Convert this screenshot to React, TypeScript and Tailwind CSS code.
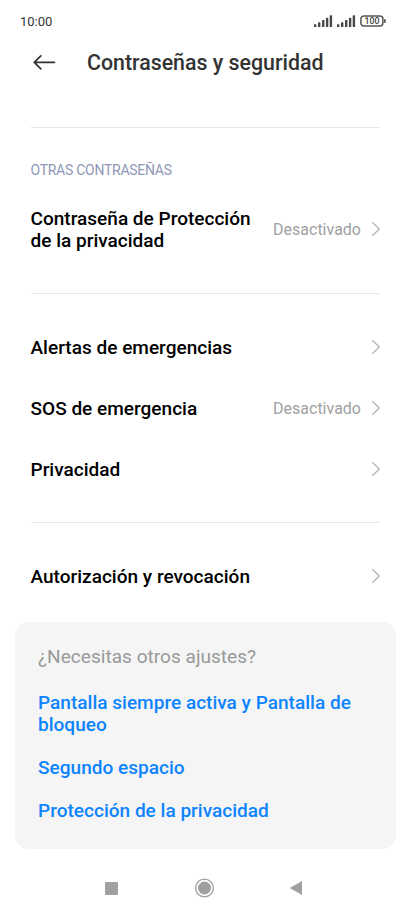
import React from 'react';

const shortcuts = [
  'Pantalla siempre activa y Pantalla de bloqueo',
  'Segundo espacio',
  'Protección de la privacidad',
];

const Signal = () => (
  <svg width="19" height="12" viewBox="0 0 19 12" fill="#484848">
    <rect x="0" y="9.2" width="2.4" height="2.8" rx="0.6" />
    <rect x="4" y="7.2" width="2.4" height="4.8" rx="0.6" />
    <rect x="8" y="5" width="2.4" height="7" rx="0.6" />
    <rect x="11.9" y="2.8" width="2.4" height="9.2" rx="0.6" />
    <rect x="15.7" y="0.3" width="2.4" height="11.7" rx="0.6" />
  </svg>
);

const StatusBar = () => (
  <div className="flex h-[42px] items-center justify-between pl-5 pr-[25px]">
    <span className="mt-px text-[13px] text-[#333]">10:00</span>
    <div className="flex items-center gap-1">
      <Signal />
      <Signal />
      <svg width="26" height="12" viewBox="0 0 26 12">
        <rect x="0.9" y="0.9" width="22" height="10.2" rx="3" fill="none" stroke="#555" strokeWidth="1.5" />
        <rect x="24" y="4" width="1.7" height="4" rx="0.7" fill="#555" />
        <text x="11.9" y="9.2" textAnchor="middle" textLength="15" lengthAdjust="spacingAndGlyphs" fontFamily="Roboto, sans-serif" fontWeight="500" fontSize="8.8" fill="#444">100</text>
      </svg>
    </div>
  </div>
);

type RowProps = { label: string; value?: string; tall?: boolean };

const Row = ({ label, value, tall }: RowProps) => (
  <div className={`flex w-full items-center ${tall ? 'h-[83px]' : 'h-[61px]'}`}>
    <span className="flex-1 text-[19.05px] leading-[22px] font-medium text-black">{label}</span>
    {value && <span className="text-[16px] text-[#a0a0a0]">{value}</span>}
    <svg className="-mt-px ml-[10px]" width="10" height="16" viewBox="0 0 10 16" fill="none" stroke="#b0b0b0" strokeWidth="1.2">
      <path d="M1.3 1.2 8.3 8 1.3 14.8" />
    </svg>
  </div>
);

const App = () => {
  return (
    <div className="h-[914px] w-[411px] overflow-hidden bg-white font-[Roboto,sans-serif]">
      <StatusBar />

      {/* Header */}
      <div className="flex h-[41px] items-center pl-[33px]">
        <svg className="-mt-px" width="23" height="16" viewBox="0 0 23 16" fill="none" stroke="#333" strokeWidth="1.7" strokeLinecap="round" strokeLinejoin="round">
          <path d="M21.5 8.4H1.5M7.8 1.9 1.3 8.4 7.8 14.9" />
        </svg>
        <h1 className="ml-[31px] text-[21.35px] leading-[31px] font-medium text-[#333]">Contraseñas y seguridad</h1>
      </div>

      {/* Settings */}
      <div className="mt-[44px] pr-[30px] pl-[30.5px]">
        <div className="mr-px h-px bg-[#e6e6e6]" />
        <h2 className="mt-[32px] text-[14px] leading-[20px] tracking-[-0.27px] text-[#8f97b8]">OTRAS CONTRASEÑAS</h2>
        <div className="mt-[8px]">
          <Row label="Contraseña de Protección de la privacidad" value="Desactivado" tall />
        </div>
        <div className="mt-[22px] mr-px mb-[23px] h-px bg-[#e6e6e6]" />
        <Row label="Alertas de emergencias" />
        <Row label="SOS de emergencia" value="Desactivado" />
        <Row label="Privacidad" />
        <div className="mt-[22px] mr-px mb-[23px] h-px bg-[#e6e6e6]" />
        <Row label="Autorización y revocación" />
      </div>

      {/* Related shortcuts */}
      <div className="mx-[15px] mt-[15px] h-[227px] rounded-[14px] bg-[#f5f5f5] px-[23px] pt-[24px]">
        <p className="text-[19.1px] leading-[22px] text-[#999]">¿Necesitas otros ajustes?</p>
        <div className="mt-[24px] flex flex-col gap-[21px]">
          {shortcuts.map((item) => (
            <a key={item} className="text-[19.06px] leading-[22px] font-medium text-[#0d84ff]">{item}</a>
          ))}
        </div>
      </div>

      {/* Navigation */}
      <div className="mt-[29px] flex items-center pl-[105px]">
        <div className="size-[13px] rounded-[1px] bg-[#a0a0a0]" />
        <svg className="ml-[76px]" width="21" height="20" viewBox="0 0 21 20">
          <circle cx="10.5" cy="10" r="8.9" fill="none" stroke="#a0a0a0" strokeWidth="1.3" />
          <circle cx="10.5" cy="10" r="6.5" fill="#a0a0a0" />
        </svg>
        <svg className="ml-[74px]" width="13" height="14" viewBox="0 0 13 14" fill="#a0a0a0">
          <path d="M13 0v14L0.7 7z" />
        </svg>
      </div>
    </div>
  );
};

export default App;
